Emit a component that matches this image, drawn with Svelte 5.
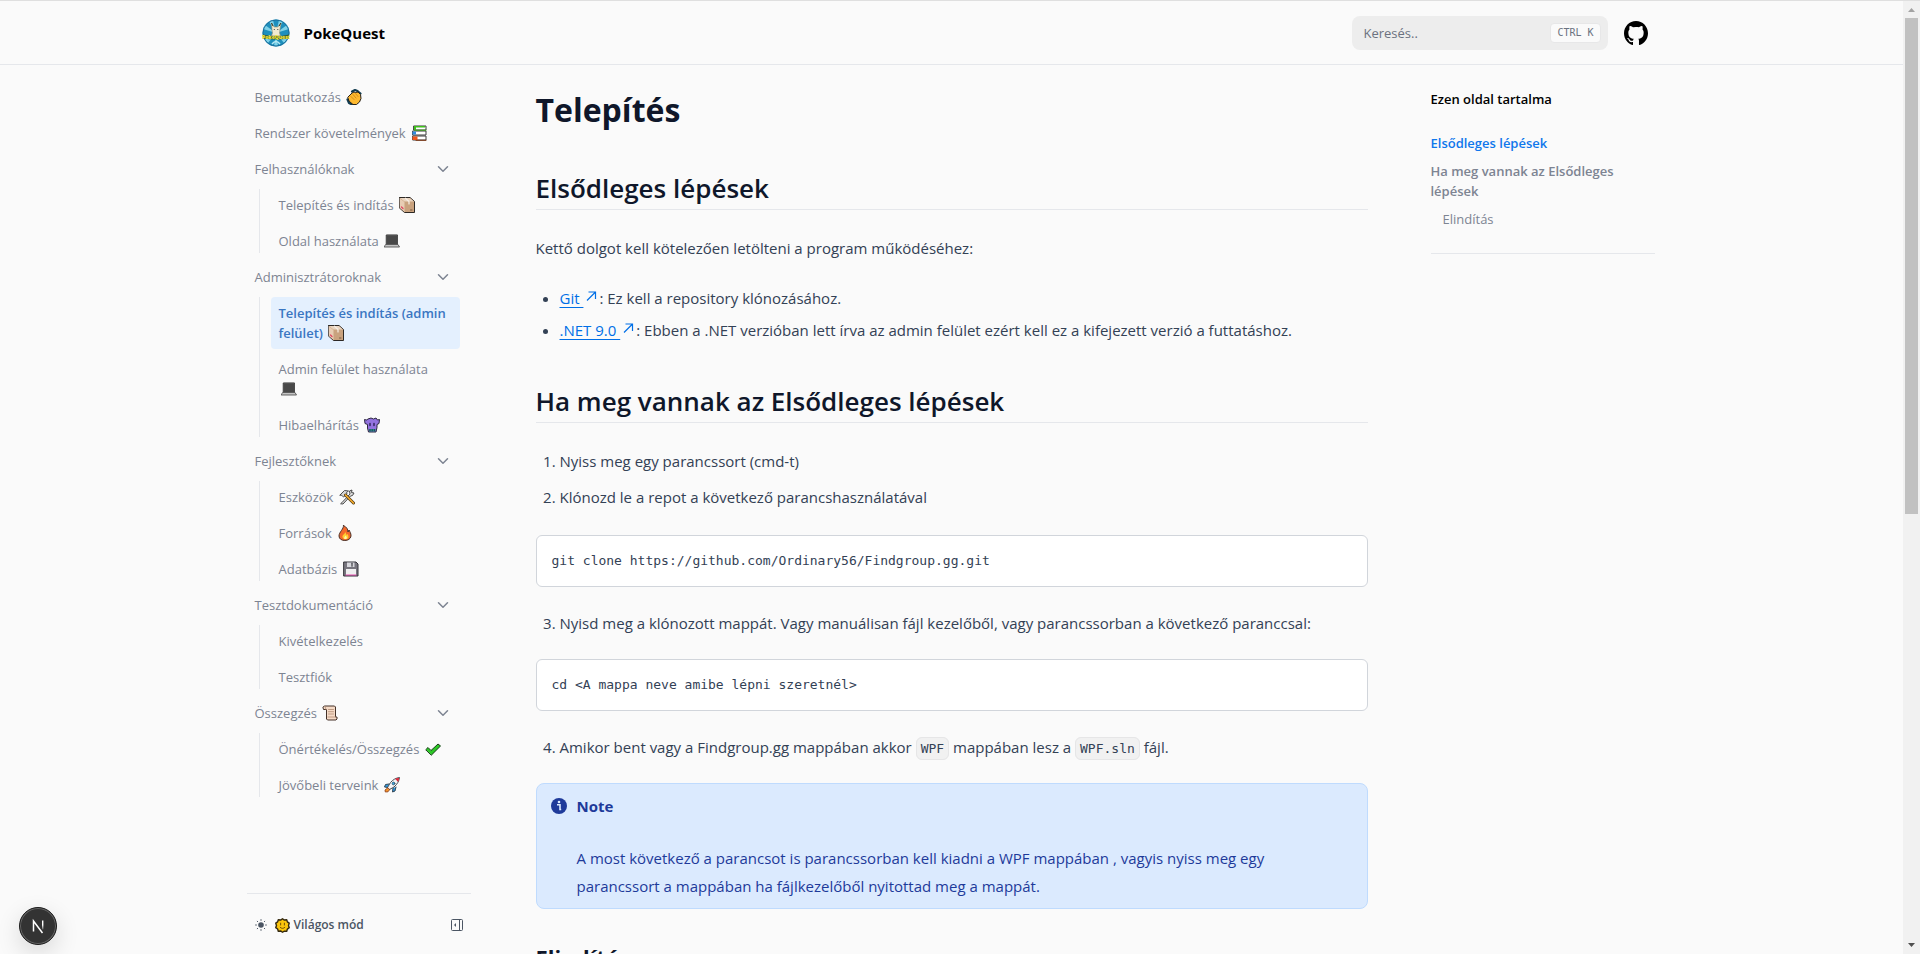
<script lang="ts">
  type Item = { text: string; icon?: string; active?: boolean; children?: Item[] };

  const nav: Item[] = [
    { text: 'Bemutatkozás', icon: 'clap' },
    { text: 'Rendszer követelmények', icon: 'books' },
    {
      text: 'Felhasználóknak',
      children: [
        { text: 'Telepítés és indítás', icon: 'box' },
        { text: 'Oldal használata', icon: 'laptop' },
      ],
    },
    {
      text: 'Adminisztrátoroknak',
      children: [
        { text: 'Telepítés és indítás (admin felület)', icon: 'box', active: true },
        { text: 'Admin felület használata', icon: 'laptop' },
        { text: 'Hibaelhárítás', icon: 'monster' },
      ],
    },
    {
      text: 'Fejlesztőknek',
      children: [
        { text: 'Eszközök', icon: 'tools' },
        { text: 'Források', icon: 'fire' },
        { text: 'Adatbázis', icon: 'floppy' },
      ],
    },
    {
      text: 'Tesztdokumentáció',
      children: [{ text: 'Kivételkezelés' }, { text: 'Tesztfiók' }],
    },
    {
      text: 'Összegzés',
      icon: 'scroll',
      children: [
        { text: 'Önértékelés/Összegzés', icon: 'check' },
        { text: 'Jövőbeli terveink', icon: 'rocket' },
      ],
    },
  ];
</script>

{#snippet emoji(name: string)}
  <svg class="emoji" viewBox="0 0 16 16" aria-hidden="true" stroke-linejoin="round" stroke-linecap="round">
    {#if name === 'clap'}
      <path d="M6 2.500 9 1l2.500 1M12 2.500l2.500 2M1.500 10.500l1.500 3.500 3 1.500" fill="none" stroke="#123c50" stroke-width="2.200" />
      <path d="M2 8 6 4l2-1 1.500.5L12 3l2.500 2.500.5 4-1.500 3.500-3 2.500H7L3.500 12.500Z" fill="#fdb92f" stroke="#26201a" />
      <path d="m5 7.500 3 3M7 5.500l3 3.500M9.500 4.500l2.500 3" fill="none" stroke="#c98412" stroke-width=".8" />
    {:else if name === 'books'}
      <path d="M3 1h12v4H3zM2 6h13v4H2zM2 11h13v4H2z" fill="#fff" stroke="#3a3a3a" />
      <path d="M3 1h11v1.500H5V5H3z" fill="#3fbf1c" />
      <path d="M3.500 5.200H15" stroke="#3fa51c" />
      <path d="M1.500 6.500H5v3H1.500z" fill="#2f8be0" />
      <path d="M1.500 11.500H6.500v3.500H1.500z" fill="#f0571c" />
      <path d="M5 15.300h10" stroke="#7c3512" />
    {:else if name === 'box'}
      <path d="M.500.500h10.500l4.500 4V15.500H5.500L.500 11Z" fill="#c9a27e" stroke="#2c2825" />
      <path d="m1 1 9.800 0 4.200 3.500H5.500Z" fill="#ead5c0" />
      <path d="M1 1.500 5.500 5v10L1 11Z" fill="#e8cdb4" />
      <path d="m6.500 1.200 3.500 3.300v2.500" stroke="#f7eee5" stroke-width="1.200" fill="none" />
      <path d="m2.500 10 1.500 1.500" stroke="#e04560" stroke-width="1.300" />
      <path d="M11.500 13h1.500" stroke="#7a5a40" />
    {:else if name === 'laptop'}
      <path d="M2.500 2h11v9.500h-11z" fill="#484848" stroke="#7e7e7e" />
      <path d="M2.500 11.500V2h11v9.500" stroke="#2a2a2a" stroke-width=".6" fill="none" />
      <path d="M2 11.500h12l1.500 2.500H.500Z" fill="#c4c4c4" stroke="#555" stroke-width=".9" />
    {:else if name === 'monster'}
      <path d="M4 2 7 1l2.500 1L12 1l1.500 2 2-.5-.5 4-2 1v3l-1 4.500H4.500L3.500 11V7.500L1 6.500.500 2.500l2 .5Z" fill="#9373df" stroke="#2c2740" />
      <path d="M6 6.500v2M10 6.500v2" stroke="#2a2055" stroke-width="1.400" />
      <path d="M5 12h6.500v2.500H5z" fill="#2d8288" />
      <path d="M6 12.500v1.500M8.300 12.500v1.500M10.500 12.500v1.500" stroke="#173f46" stroke-width=".7" />
    {:else if name === 'tools'}
      <path d="m3 13.500 8-8.500-.5-3L13 1l-.5 2.500L15 4l-1.500 2.500-2 .5-7.500 8-2-.2Z" fill="#ddd" stroke="#4b4b4b" />
      <path d="m1 6 4.500-4.500 4 .5-2 1.500L8 5 4.500 8 3 6.500Z" fill="#d7d7d7" stroke="#4b4b4b" />
      <path d="m6.500 6 8 8" stroke="#493719" stroke-width="3" />
      <path d="m6.500 6 8 8" stroke="#f5ab2a" stroke-width="1.700" />
    {:else if name === 'fire'}
      <path d="M6.500.500C7 4 2 7 2 11c0 6 11.500 6 12 0 0-3-1-4-2-6l-1 2C11 4 9.500 2 6.500.500Z" fill="#f4682a" stroke="#4b332a" />
      <path d="M8.500 7c-.5 2-3.500 3-3 5 .5 3 6 3 6 0 0-1.500-.5-2-1-3l-1 1Z" fill="#ffcd30" />
      <path d="M8.500 10.500c-2.500 3-1 4 .5 3.500s1-2-.5-3.500Z" fill="#fff4a7" />
    {:else if name === 'floppy'}
      <path d="M1 1h12l2 2v12H1Z" fill="#77757e" stroke="#35343a" />
      <path d="M4 1.500h7.500V6H4z" fill="#d7d7dc" />
      <path d="M9 2.200v3" stroke="#4b4b51" stroke-width="1.300" />
      <path d="M3 8h10v6H3z" fill="#f0f0f1" />
      <path d="M3 14h10" stroke="#e850b0" stroke-width="1.200" />
    {:else if name === 'scroll'}
      <path d="M3 1h9.500l1 1v10H15v2l-1 1H5.500l-1-1V4.500H1.500L1 2.500Z" fill="#f5dac6" stroke="#443128" />
      <path d="M3 1.500 4 4.500M6.500 4.500h5M6.500 6.700h5M6.500 9h5M6 12h7.500" stroke="#b28c73" stroke-width=".8" fill="none" />
    {:else if name === 'check'}
      <path d="m1 8.500 2-2L6 9.500 13 3l2.500 2L6.500 14Z" fill="#2bc725" stroke="#173d17" />
    {:else if name === 'rocket'}
      <path d="m5 7-3.500.5L.500 10 4 10.500M9 11l-.5 4 2.500-1 1-4" fill="#2e98dd" stroke="#354656" />
      <path d="m3.500 10.500 3-5C9 2.500 12 1 15.500.500 15 4 13.500 7 10 10l-4.500 2.500Z" fill="#f5f5f7" stroke="#444d56" />
      <path d="M11 1.800 15.300.700 14.200 5Z" fill="#df2636" />
      <circle cx="9.500" cy="6.500" r="1.400" fill="#37abe8" stroke="#354656" stroke-width=".7" />
      <path d="m3.500 11-2.500 2 .3 2L4 14.800l1.500-2Z" fill="#f5932c" stroke="#883c1b" stroke-width=".8" />
    {:else if name === 'sun'}
      <path d="m8 .800 2 1.400 2.500-.4.700 2.300 2 1.400-.8 2.500.8 2.300-2 1.500-.7 2.400-2.500-.2L8 15.200 6 13.800l-2.500.3-.7-2.400-2-1.500.8-2.300L.800 5.500l2-1.400.7-2.300 2.500.4Z" fill="#fbc50c" stroke="#352a10" stroke-width="1.500" />
      <path d="M6 5.500v2M10 5.500v2M5.500 10c1.500 1.500 3.500 1.500 5 0" stroke="#6a4908" fill="none" />
    {/if}
  </svg>
{/snippet}

{#snippet chevron()}
  <svg class="chevron" viewBox="0 0 24 24" fill="none" stroke="currentColor" stroke-width="2" stroke-linecap="round" stroke-linejoin="round" aria-hidden="true">
    <path d="m6 9 6 6 6-6" />
  </svg>
{/snippet}

{#snippet external()}
  <svg class="external" viewBox="0 0 12 12" fill="none" stroke="currentColor" stroke-width="1.200" aria-hidden="true">
    <path d="m2 10.500 8-8M3.500 2H10.500V9" />
  </svg>
{/snippet}

<div class="window">
  <div class="page">
    <header>
      <div class="bar">
        <a class="brand" href="#top">
          <svg class="logo" viewBox="0 0 28 28" aria-hidden="true">
            <circle cx="14" cy="14" r="13.500" fill="#1d8fbd" />
            <path d="M14 14 7 2.500 11 1ZM14 14 17 1l4 1.500ZM14 14 25 6l2 4ZM14 14 1 10l2-4ZM14 14 2 20l4 4ZM14 14 26 20l-4 4ZM14 14 12 27h4Z" fill="#7fd2e8" />
            <circle cx="14" cy="14" r="13" fill="none" stroke="#1a6f9c" />
            <path d="M9.500 4 12 8h4l3-4-1 6-.5 4 1 3h-9l1-3-.5-3.500Z" fill="#f1ead0" stroke="#998d68" stroke-width=".6" />
            <path d="M9.500 4 11 7M19 4l-2 3" stroke="#343322" />
            <circle cx="12.300" cy="10.500" r=".6" fill="#333" />
            <circle cx="15.800" cy="10.500" r=".6" fill="#333" />
            <path d="M1 15.500q13 3 26 0v4q-13 2-26 0Z" fill="#3b5c32" />
            <text x="14" y="19.500" text-anchor="middle" class="logo-text">PokeQuest</text>
            <path d="M10 25q4-5 8 0" fill="none" stroke="#b6e9f4" stroke-width="1.500" />
          </svg>
          <span>PokeQuest</span>
        </a>
        <div class="search">
          <input type="search" placeholder="Keresés.." aria-label="Keresés" />
          <kbd>CTRL K</kbd>
        </div>
        <a class="github" href="#github" aria-label="GitHub">
          <svg viewBox="3 3 18 18" width="24" height="24" fill="currentColor" aria-hidden="true">
            <path d="M12 3C7.029 3 3 7.129 3 12.233c0 4.082 2.579 7.544 6.155 8.766.45.085.615-.2.615-.444 0-.22-.009-.947-.013-1.717-2.503.558-3.031-1.090-3.031-1.090-.409-1.067-.999-1.351-.999-1.351-.817-.572.062-.561.062-.561.903.065 1.379.951 1.379.951.803 1.411 2.107 1.003 2.620.767.082-.597.314-1.004.571-1.235-1.998-.233-4.099-1.025-4.099-4.563 0-1.008.351-1.832.927-2.477-.093-.234-.401-1.173.088-2.444 0 0 .755-.248 2.475.946A8.400 8.400 0 0 1 12 7.470c.765.003 1.535.106 2.254.311 1.718-1.194 2.473-.946 2.473-.946.490 1.271.182 2.210.089 2.444.577.645.926 1.469.926 2.477 0 3.547-2.105 4.327-4.109 4.556.323.286.610.848.610 1.710 0 1.235-.011 2.231-.011 2.534 0 .247.162.534.619.443C18.424 19.774 21 16.314 21 12.233 21 7.129 16.970 3 12 3Z" />
          </svg>
        </a>
      </div>
    </header>

    <div class="columns">
      <aside class="sidebar">
        <nav aria-label="Dokumentáció">
          <ul>
            {#each nav as item}
              <li>
                {#if item.children}
                  <button class="entry" type="button" aria-expanded="true">
                    <span>{item.text}{#if item.icon}{' '}{@render emoji(item.icon)}{/if}</span>
                    {@render chevron()}
                  </button>
                  <ul class="children">
                    {#each item.children as child}
                      <li>
                        <a class="entry" class:active={child.active} href="#page">
                          <span>{child.text}{#if child.icon}{' '}{@render emoji(child.icon)}{/if}</span>
                        </a>
                      </li>
                    {/each}
                  </ul>
                {:else}
                  <a class="entry" href="#page"><span>{item.text}{#if item.icon}{' '}{@render emoji(item.icon)}{/if}</span></a>
                {/if}
              </li>
            {/each}
          </ul>
        </nav>
        <div class="sidebar-foot">
          <button class="theme" type="button">
            <svg width="12" height="12" viewBox="0 0 12 12" stroke="currentColor" stroke-linecap="round" aria-hidden="true">
              <circle cx="6" cy="6" r="2.800" fill="currentColor" stroke="none" />
              <path d="M6 .600v.8M6 10.600v.8M.600 6h.8M10.600 6h.8M2.200 2.200l.5.500M9.300 9.300l.5.500M2.200 9.800l.5-.5M9.300 2.700l.5-.5" />
            </svg>
            {@render emoji('sun')}
            <span>Világos mód</span>
          </button>
          <button class="collapse" type="button" aria-label="Oldalsáv elrejtése">
            <svg width="12" height="12" viewBox="0 0 12 12" fill="none" stroke="currentColor" aria-hidden="true">
              <rect x=".5" y=".5" width="11" height="11" rx="1" />
              <path d="M8.500.500v11" />
              <path d="M5 4v4L3 6Z" fill="currentColor" stroke="none" />
            </svg>
          </button>
        </div>
      </aside>

      <main>
        <h1>Telepítés</h1>
        <h2>Elsődleges lépések</h2>
        <p>Kettő dolgot kell kötelezően letölteni a program működéséhez:</p>
        <ul class="bullets">
          <li><a href="#git">Git&nbsp;{@render external()}</a>: Ez kell a repository klónozásához.</li>
          <li><a href="#net">.NET 9.0&nbsp;{@render external()}</a>: Ebben a .NET verzióban lett írva az admin felület ezért kell ez a kifejezett verzió a futtatáshoz.</li>
        </ul>
        <h2>Ha meg vannak az Elsődleges lépések</h2>
        <ol>
          <li>Nyiss meg egy parancssort (cmd-t)</li>
          <li>Klónozd le a repot a következő parancshasználatával</li>
        </ol>
        <pre><code>git clone https://github.com/Ordinary56/Findgroup.gg.git</code></pre>
        <ol start="3">
          <li>Nyisd meg a klónozott mappát. Vagy manuálisan fájl kezelőből, vagy parancssorban a következő paranccsal:</li>
        </ol>
        <pre><code>{'cd <A mappa neve amibe lépni szeretnél>'}</code></pre>
        <ol start="4">
          <li>Amikor bent vagy a Findgroup.gg mappában akkor <code>WPF</code> mappában lesz a <code>WPF.sln</code> fájl.</li>
        </ol>
        <section class="note">
          <svg viewBox="0 0 16 16" width="16" height="16" aria-hidden="true">
            <circle cx="8" cy="8" r="8" fill="#1e3a9a" />
            <circle cx="8" cy="4" r="1.300" fill="#dbeafe" />
            <path d="M6 6.700h3v4.800h1.200M6 6.700" stroke="#dbeafe" stroke-width="1.600" fill="none" />
          </svg>
          <div>
            <strong>Note</strong>
            <p>A most következő a parancsot is parancssorban kell kiadni a WPF mappában , vagyis nyiss meg egy parancssort a mappában ha fájlkezelőből nyitottad meg a mappát.</p>
          </div>
        </section>
        <h3>Elindítás</h3>
      </main>

      <aside class="toc">
        <p class="toc-title">Ezen oldal tartalma</p>
        <ul>
          <li><a class="current" href="#elso">Elsődleges lépések</a></li>
          <li><a href="#ha-meg">Ha meg vannak az Elsődleges lépések</a></li>
          <li class="deep"><a href="#elinditas">Elindítás</a></li>
        </ul>
      </aside>
    </div>
  </div>

  <div class="scrollbar" aria-hidden="true">
    <svg width="17" height="17" viewBox="0 0 17 17"><path d="M5 11h7L8.500 7Z" fill="#a3a3a3" /></svg>
    <div class="track"><div class="thumb"></div></div>
    <svg width="17" height="17" viewBox="0 0 17 17"><path d="M5 6h7L8.500 10Z" fill="#505050" /></svg>
  </div>

  <button class="devtools" type="button" aria-label="Next.js">
    <svg width="16" height="16" viewBox="0 0 16 16" fill="none" stroke-width="1.500" aria-hidden="true">
      <defs>
        <linearGradient id="fade" x1="0" y1="0" x2="0" y2="1">
          <stop offset=".5" stop-color="#fff" />
          <stop offset="1" stop-color="#fff" stop-opacity=".2" />
        </linearGradient>
      </defs>
      <path d="M3.500 13.500V3L12.500 15" stroke="#fff" />
      <path d="M12 2.500h1.400v9H12z" fill="url(#fade)" />
    </svg>
  </button>
</div>

<style>
  :global(body) {
    background: #fafafa;
  }
  * {
    box-sizing: border-box;
  }
  .window {
    display: flex;
    height: 100vh;
    border-top: 1px solid #dfdfdf;
    font-family: 'Open Sans', 'Noto Sans', sans-serif;
    font-size: 15px;
    line-height: 28px;
    color: #334155;
    overflow: hidden;
  }
  .page {
    flex: 1;
    min-width: 0;
    display: flex;
    flex-direction: column;
  }
  ul,
  ol,
  p,
  pre,
  h1,
  h2,
  h3 {
    margin: 0;
    padding: 0;
  }
  a {
    color: inherit;
    text-decoration: none;
  }
  button {
    font: inherit;
    color: inherit;
    background: none;
    border: 0;
    padding: 0;
    text-align: left;
    cursor: pointer;
  }
  code,
  kbd {
    font-family: 'DejaVu Sans Mono', 'Liberation Mono', monospace;
  }

  header {
    flex: none;
    border-bottom: 1px solid #e5e7eb;
  }
  .bar,
  .columns {
    width: 100%;
    max-width: 1440px;
    margin: 0 auto;
  }
  .bar {
    display: flex;
    align-items: center;
    gap: 16px;
    height: 63px;
    padding: 0 24px;
  }
  .brand {
    display: flex;
    align-items: center;
    gap: 14px;
    margin-right: auto;
    padding-left: 6px;
    font-weight: 700;
    color: #000;
  }
  .logo {
    width: 28px;
    height: 28px;
  }
  .logo-text {
    font-size: 5px;
    font-weight: 800;
    fill: #f4e437;
  }
  .search {
    display: flex;
    align-items: center;
    width: 256px;
    height: 34px;
    padding: 0 7px 0 12px;
    border-radius: 8px;
    background: #ededed;
  }
  .search input {
    flex: 1;
    min-width: 0;
    border: 0;
    padding: 0;
    outline: 0;
    background: none;
    font: inherit;
    font-size: 13px;
    line-height: 20px;
    color: #111827;
  }
  .search input::placeholder {
    color: #6b7280;
  }
  kbd {
    height: 20px;
    padding: 0 6px;
    border: 1px solid #e7e7e8;
    border-radius: 4px;
    background: #fafafa;
    font-size: 10px;
    line-height: 18px;
    color: #6b7280;
  }
  .github {
    display: flex;
    color: #000;
  }

  .columns {
    flex: 1;
    min-height: 0;
    display: flex;
  }
  .sidebar {
    flex: none;
    width: 256px;
    display: flex;
    flex-direction: column;
    font-size: 13px;
    line-height: 20px;
    color: #7d8492;
  }
  .sidebar nav {
    flex: 1;
    min-height: 0;
    padding: 16px 28px 16px 15px;
  }
  .sidebar ul {
    display: flex;
    flex-direction: column;
    gap: 4px;
    list-style: none;
  }
  .entry {
    display: flex;
    align-items: center;
    justify-content: space-between;
    width: 100%;
    padding: 6px 8px;
    border-radius: 4px;
  }
  .entry.active {
    background: #e4f0fe;
    color: #3a76c2;
    font-weight: 600;
  }
  .sidebar .children {
    margin: 4px 0 4px 12px;
    padding-left: 11px;
    border-left: 1px solid #e5e7eb;
  }
  .children li:last-child {
    margin-bottom: -4px;
  }
  .emoji {
    width: 16px;
    height: 16px;
    margin: 0 4px 0 2px;
    vertical-align: -3px;
  }
  .chevron {
    width: 18px;
    height: 18px;
  }
  .sidebar-foot {
    display: flex;
    align-items: center;
    justify-content: space-between;
    height: 61px;
    margin: 0 17px 0 15px;
    padding: 2px 8px 0;
    border-top: 1px solid #e5e7eb;
    font-size: 12px;
    font-weight: 600;
    color: #4b5563;
  }
  .theme {
    display: flex;
    align-items: center;
    gap: 8px;
  }
  .theme .emoji {
    width: 15px;
    height: 15px;
    margin: 0 -4px 0 0;
  }
  .collapse {
    display: flex;
  }

  main {
    flex: 1;
    min-width: 0;
    padding: 24px 48px 0;
    overflow: hidden;
  }
  h1,
  h2,
  h3 {
    color: #0f172a;
  }
  h1 {
    font-size: 32px;
    line-height: 42px;
    font-weight: 700;
  }
  h2 {
    margin: 40px 0 24px;
    padding-bottom: 3px;
    border-bottom: 1px solid #e5e7eb;
    font-size: 26px;
    line-height: 35px;
    font-weight: 600;
  }
  h3 {
    margin-top: 32px;
    font-size: 22px;
    line-height: 32px;
    font-weight: 700;
  }
  main ul,
  main ol {
    margin: 22px 0;
    padding-left: 24px;
  }
  h2 + ol {
    margin: 24px 0;
  }
  .bullets li + li {
    margin-top: 4px;
  }
  ol li + li {
    margin-top: 8px;
  }
  .bullets a {
    color: #006fe6;
    text-decoration: underline;
    text-underline-offset: 3px;
  }
  .external {
    width: 12px;
    height: 12px;
    margin: 0 2px;
    vertical-align: 2px;
  }
  pre {
    padding: 11px 15px;
    border: 1px solid #d1d5db;
    border-radius: 6px;
    background: #fff;
  }
  pre code {
    display: block;
    font-size: 13px;
    line-height: 28px;
  }
  li code {
    padding: 3px 4px;
    border: 1px solid #e6e6e7;
    border-radius: 6px;
    background: #f1f1f1;
    font-size: 13px;
    line-height: 1;
  }
  .note {
    display: flex;
    gap: 10px;
    padding: 8px 32px 8px 14px;
    border: 1px solid #bfdbfe;
    border-radius: 8px;
    background: #dbeafe;
    color: #1e3a9a;
  }
  .note svg {
    flex: none;
    margin-top: 6px;
  }
  .note strong {
    display: block;
    font-weight: 700;
  }
  .note p {
    margin-top: 24px;
  }

  .toc {
    flex: none;
    width: 256px;
    padding: 24px 17px 24px 15px;
    font-size: 13px;
    line-height: 20px;
    color: #7d8492;
  }
  .toc-title {
    color: #000;
    font-weight: 600;
  }
  .toc ul {
    display: flex;
    flex-direction: column;
    gap: 8px;
    padding: 24px 0;
    border-bottom: 1px solid #e5e7eb;
    list-style: none;
    font-weight: 600;
  }
  .toc .current {
    color: #0f77ec;
  }
  .toc .deep {
    padding-left: 12px;
    font-weight: 400;
  }

  .scrollbar {
    flex: none;
    display: flex;
    flex-direction: column;
    width: 17px;
    background: #f1f1f1;
  }
  .scrollbar svg {
    flex: none;
  }
  .track {
    flex: 1;
    padding: 0 2px;
  }
  .thumb {
    height: 54%;
    background: #c1c1c1;
  }
  .devtools {
    position: fixed;
    left: 19px;
    bottom: 9px;
    display: flex;
    align-items: center;
    justify-content: center;
    width: 38px;
    height: 38px;
    border: 1px solid #1d1d1d;
    border-radius: 50%;
    background: #333;
    box-shadow:
      inset 0 0 0 1px #666,
      0 8px 24px rgba(0, 0, 0, 0.14);
  }
</style>
